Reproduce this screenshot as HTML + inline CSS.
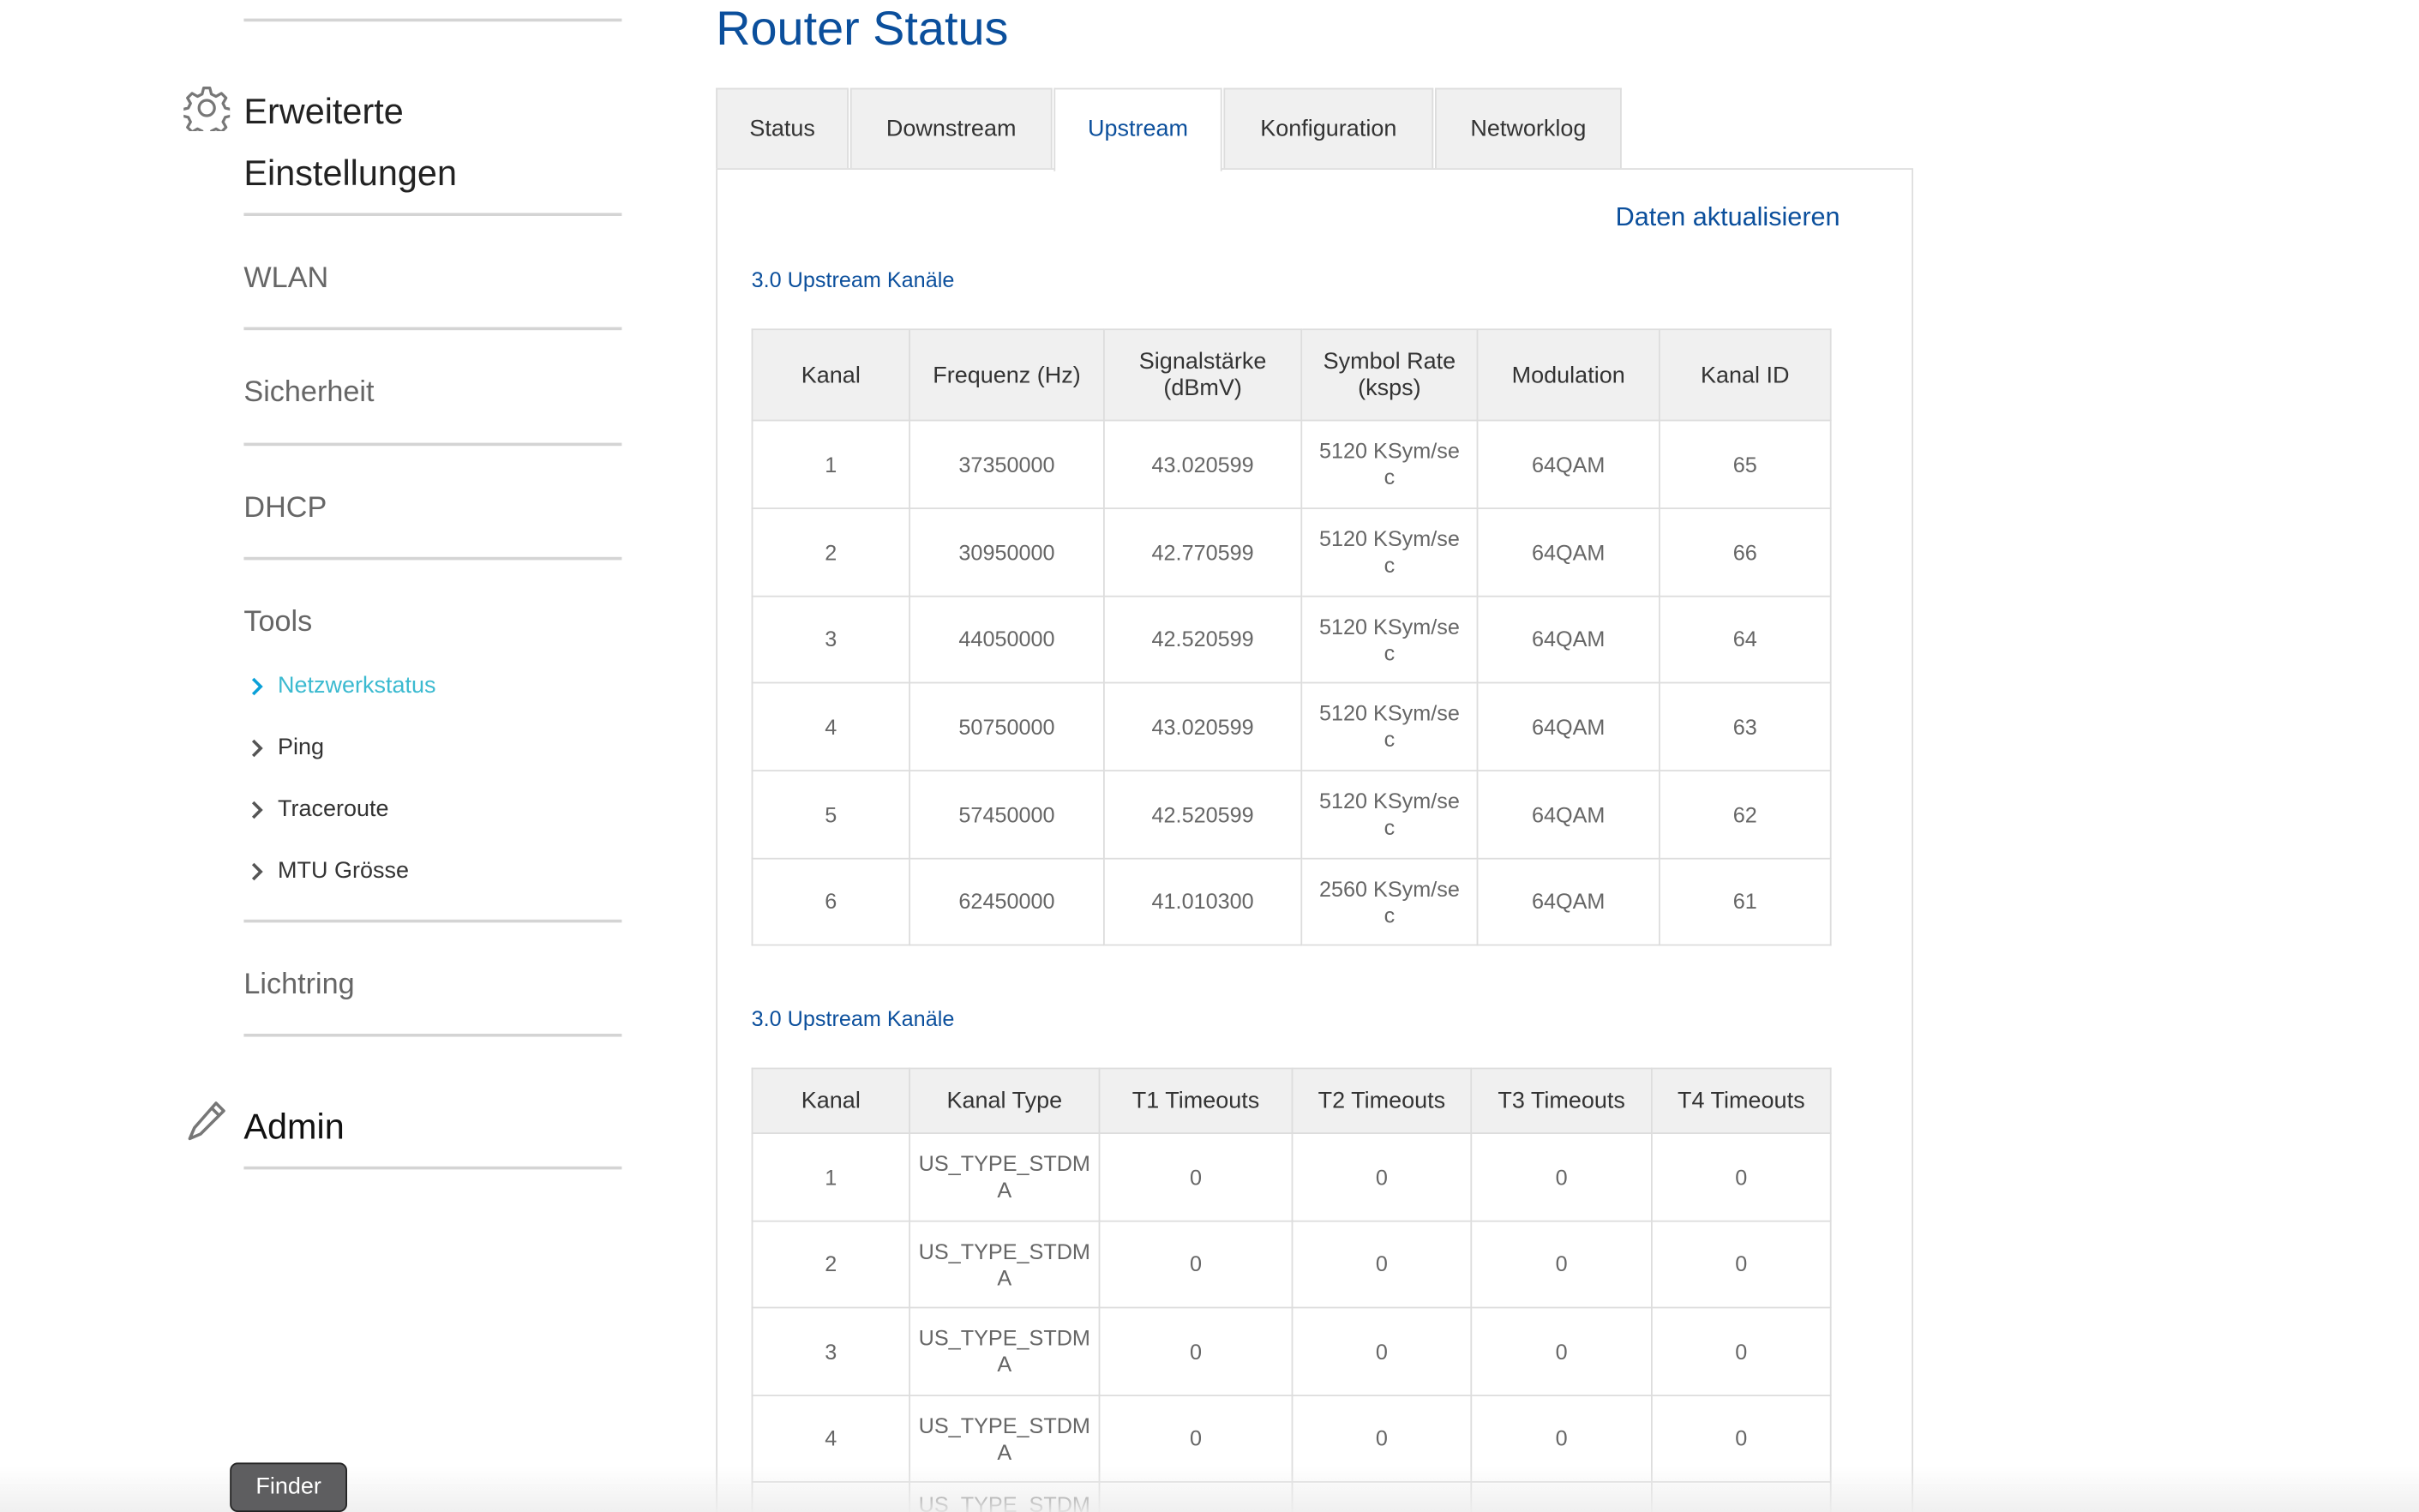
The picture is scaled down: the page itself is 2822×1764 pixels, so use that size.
<!DOCTYPE html>
<html><head><meta charset="utf-8">
<style>
html,body{margin:0;padding:0;width:2822px;height:1764px;overflow:hidden;background:#fff}
#o{position:absolute;left:0;top:0;width:2822px;height:1764px;overflow:hidden}
#w{position:absolute;left:0;top:0;width:1568px;height:980px;overflow:hidden;transform:scale(1.8);transform-origin:0 0;font-family:"Liberation Sans",sans-serif;}
.a{position:absolute;white-space:nowrap}
.ln{position:absolute;left:158px;width:245px;height:2px;background:#d4d4d4}
.nav{position:absolute;left:158px;font-size:19px;color:#666;line-height:24px}
.sub{position:absolute;left:180px;font-size:15px;color:#333;line-height:20px}
.chev{position:absolute;left:162px;width:9px;height:12px}
.tab{position:absolute;top:57px;height:52px;background:#f0f0f0;border:1px solid #ddd;border-bottom:none;font-size:15px;color:#333;text-align:center;line-height:52px;box-sizing:border-box}
table{position:absolute;border-collapse:collapse;left:487px;width:700px;table-layout:fixed}
td,th{border:1px solid #ddd;text-align:center;font-size:14px;color:#666;font-weight:normal;padding:0;line-height:17px}
th{background:#f0f0f0;color:#333;font-size:15px}
.b{color:#0b4f9c}
</style></head><body><div id="o"><div id="w">
<div class="ln" style="top:12px"></div>
<svg class="a" style="left:119px;top:55px" width="30" height="30" viewBox="0 0 30 30"><path d="M13 2h4l1 4 3 1.5 3.5-2 3 3-2 3.5 1.5 3 4 1v4l-4 1-1.5 3 2 3.5-3 3-3.5-2-3 1.5-1 4h-4l-1-4-3-1.5-3.5 2-3-3 2-3.5-1.5-3-4-1v-4l4-1 1.5-3-2-3.5 3-3 3.5 2 3-1.5z" fill="none" stroke="#777" stroke-width="1.8" stroke-linejoin="round"/><circle cx="15" cy="15" r="5" fill="none" stroke="#777" stroke-width="1.8"/></svg>
<div class="a" style="left:158px;top:58px;font-size:23px;color:#222;line-height:28px">Erweiterte</div>
<div class="a" style="left:158px;top:98px;font-size:23px;color:#222;line-height:28px">Einstellungen</div>
<div class="ln" style="top:138px"></div>
<div class="nav" style="top:169px">WLAN</div>
<div class="ln" style="top:212px"></div>
<div class="nav" style="top:243px">Sicherheit</div>
<div class="ln" style="top:287px"></div>
<div class="nav" style="top:318px">DHCP</div>
<div class="ln" style="top:361px"></div>
<div class="nav" style="top:392px">Tools</div>
<svg class="chev" style="top:439px" viewBox="0 0 9 12"><path d="M2 1l5 5-5 5" fill="none" stroke="#0aa0d8" stroke-width="2"/></svg>
<div class="sub" style="top:435px;color:#3bbad0">Netzwerkstatus</div>
<svg class="chev" style="top:479px" viewBox="0 0 9 12"><path d="M2 1l5 5-5 5" fill="none" stroke="#555" stroke-width="2"/></svg>
<div class="sub" style="top:475px">Ping</div>
<svg class="chev" style="top:519px" viewBox="0 0 9 12"><path d="M2 1l5 5-5 5" fill="none" stroke="#555" stroke-width="2"/></svg>
<div class="sub" style="top:515px">Traceroute</div>
<svg class="chev" style="top:559px" viewBox="0 0 9 12"><path d="M2 1l5 5-5 5" fill="none" stroke="#555" stroke-width="2"/></svg>
<div class="sub" style="top:555px">MTU Grösse</div>
<div class="ln" style="top:596px"></div>
<div class="nav" style="top:627px">Lichtring</div>
<div class="ln" style="top:670px"></div>
<svg class="a" style="left:120px;top:713px" width="28" height="28" viewBox="0 0 28 28"><path d="M20 2l5 5L10 22l-7 3 3-7z M17 5l5 5" fill="none" stroke="#777" stroke-width="2" stroke-linejoin="round"/></svg>
<div class="a" style="left:158px;top:716px;font-size:23px;color:#111;line-height:28px">Admin</div>
<div class="ln" style="top:756px"></div>

<div class="a b" style="left:464px;top:0px;font-size:31px;line-height:38px">Router Status</div>
<div class="tab" style="left:464px;width:86px">Status</div>
<div class="tab" style="left:551px;width:131px">Downstream</div>
<div class="tab b" style="left:683px;width:109px;background:#fff;height:54px;z-index:2;color:#0b4f9c">Upstream</div>
<div class="tab" style="left:793px;width:136px">Konfiguration</div>
<div class="tab" style="left:930px;width:121px">Networklog</div>
<div class="a" style="left:464px;top:109px;width:776px;height:900px;border:1px solid #ddd;box-sizing:border-box"></div>
<div class="a b" style="left:1047px;top:130px;font-size:17px;line-height:22px">Daten aktualisieren</div>
<div class="a b" style="left:487px;top:172px;font-size:14px;line-height:18px">3.0 Upstream Kanäle</div>
<table style="top:213px">
<colgroup><col style="width:102px"><col style="width:126px"><col style="width:128px"><col style="width:114px"><col style="width:118px"><col style="width:111px"></colgroup>
<tr style="height:59px"><th>Kanal</th><th>Frequenz (Hz)</th><th>Signalstärke<br>(dBmV)</th><th>Symbol Rate<br>(ksps)</th><th>Modulation</th><th>Kanal ID</th></tr>
<tr style="height:57px"><td>1</td><td>37350000</td><td>43.020599</td><td>5120 KSym/se<br>c</td><td>64QAM</td><td>65</td></tr>
<tr style="height:57px"><td>2</td><td>30950000</td><td>42.770599</td><td>5120 KSym/se<br>c</td><td>64QAM</td><td>66</td></tr>
<tr style="height:56px"><td>3</td><td>44050000</td><td>42.520599</td><td>5120 KSym/se<br>c</td><td>64QAM</td><td>64</td></tr>
<tr style="height:57px"><td>4</td><td>50750000</td><td>43.020599</td><td>5120 KSym/se<br>c</td><td>64QAM</td><td>63</td></tr>
<tr style="height:57px"><td>5</td><td>57450000</td><td>42.520599</td><td>5120 KSym/se<br>c</td><td>64QAM</td><td>62</td></tr>
<tr style="height:56px"><td>6</td><td>62450000</td><td>41.010300</td><td>2560 KSym/se<br>c</td><td>64QAM</td><td>61</td></tr>
</table>
<div class="a b" style="left:487px;top:651px;font-size:14px;line-height:18px">3.0 Upstream Kanäle</div>
<table style="top:692px">
<colgroup><col style="width:102px"><col style="width:123px"><col style="width:125px"><col style="width:116px"><col style="width:117px"><col style="width:116px"></colgroup>
<tr style="height:42px"><th>Kanal</th><th>Kanal Type</th><th>T1 Timeouts</th><th>T2 Timeouts</th><th>T3 Timeouts</th><th>T4 Timeouts</th></tr>
<tr style="height:57px"><td>1</td><td>US_TYPE_STDM<br>A</td><td>0</td><td>0</td><td>0</td><td>0</td></tr>
<tr style="height:56px"><td>2</td><td>US_TYPE_STDM<br>A</td><td>0</td><td>0</td><td>0</td><td>0</td></tr>
<tr style="height:57px"><td>3</td><td>US_TYPE_STDM<br>A</td><td>0</td><td>0</td><td>0</td><td>0</td></tr>
<tr style="height:56px"><td>4</td><td>US_TYPE_STDM<br>A</td><td>0</td><td>0</td><td>0</td><td>0</td></tr>
<tr style="height:57px"><td style="vertical-align:top">&nbsp;</td><td style="vertical-align:top;line-height:28px">US_TYPE_STDM</td><td></td><td></td><td></td><td></td></tr>
</table>
<div class="a" style="left:0;top:950px;width:1568px;height:30px;background:linear-gradient(rgba(240,240,240,0),rgba(238,238,238,0.9));z-index:3"></div>
<div class="a" style="left:149px;top:948px;width:76px;height:32px;background:#5e5e60;border:1px solid #222;border-radius:5px;box-sizing:border-box;color:#fff;font-size:15px;text-align:center;line-height:30px;z-index:4">Finder</div>
</div></div></body></html>
